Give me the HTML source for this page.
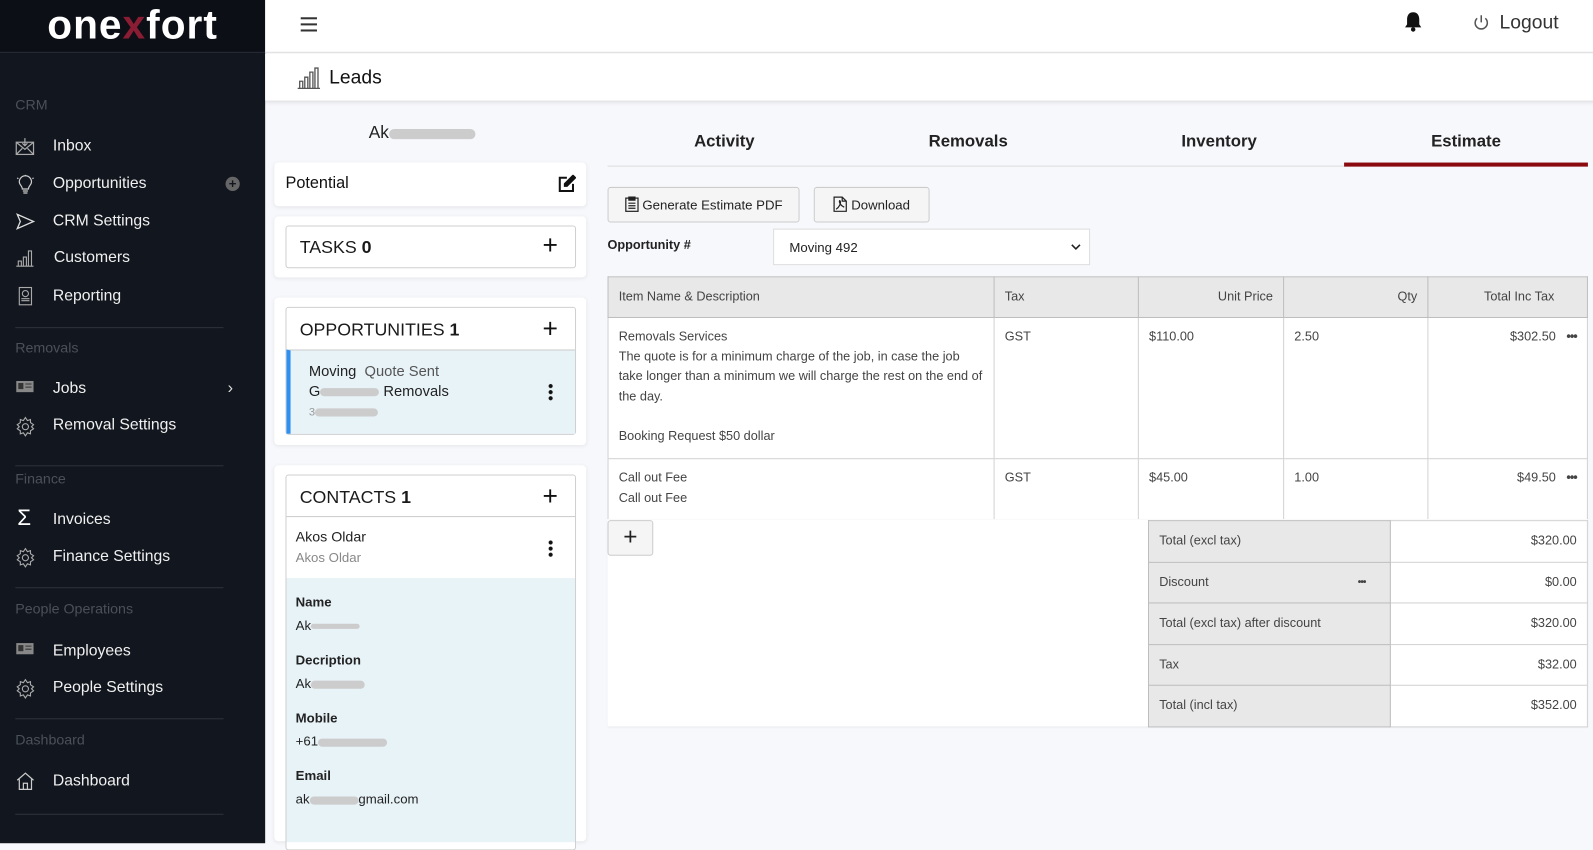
<!DOCTYPE html>
<html><head><meta charset="utf-8"><style>
*{box-sizing:border-box;margin:0;padding:0}
body{width:1593px;height:823px;overflow:hidden;background:#f7f8fc;font-family:"Liberation Sans",sans-serif;position:relative;color:#222}
#w{position:absolute;left:0;top:0;width:1568px;height:810px;transform:scale(1.01594);transform-origin:0 0}
.a{position:absolute}
#sb{left:0;top:0;width:261px;height:830px;background:#12161e}
#logo{left:0;top:0;width:261px;height:52px;background:#0c0f16;border-bottom:1px solid #2a2e36;color:#fff;font-size:40px;font-weight:bold;text-align:center;line-height:50px;letter-spacing:1px}
.sec{left:15px;font-size:14px;color:#4b5059}
.it{left:52px;font-size:15.5px;color:#f0f0f0}
.ic{left:15px;width:20px;height:18px;color:#bbb}
.hr{left:15px;width:205px;height:1px;background:#2e333b}
.card{background:#fff;border-radius:4px;box-shadow:0 1px 4px rgba(0,0,0,.08)}
.box{border:1px solid #cfcfcf;border-radius:3px;background:#fff}
.ttl{font-size:17.5px;color:#1a1a1a}
.plus{font-size:26px;font-weight:300;color:#111}
.lbl{left:291px;font-size:13px;font-weight:bold;color:#222}
.val{left:291px;font-size:13px;color:#222}
.blur{display:inline-block;background:#ccc;border-radius:5px;height:8px;vertical-align:middle}
.tab{top:130px;font-size:16.5px;font-weight:bold;color:#222;text-align:center}
table{border-collapse:collapse;table-layout:fixed}
td{border:1px solid #d2d2d2;font-size:12.5px;color:#444;vertical-align:top;padding:9px 10px;line-height:19.5px}
.th td{background:#e8e8e8;border-color:#bdbdbd;padding:0 10px;height:40px;vertical-align:middle}
.r{text-align:right}
.tot td{height:40.5px;padding:0 10px;vertical-align:middle}
.tot td.g{background:#e8e8e8;border-color:#bdbdbd}
.btn{background:#f5f5f5;border:1px solid #ccc;border-radius:3px;font-size:13px;color:#222;text-align:center}
</style></head><body><div id="w">
<div id="sb" class="a"></div>
<div id="logo" class="a">one<span style="color:#8a1c33">x</span>fort</div>
<div class="a sec" style="top:95px">CRM</div>
<div class="a ic" style="top:135px"><svg width="20" height="18" viewBox="0 0 20 18" fill="none" stroke="#aaa" stroke-width="1.2"><rect x="1" y="5" width="17" height="12"/><path d="M1 5l8.5 7L18 5M1 17l6-6M18 17l-6-6M9.5 1v7M7 6l2.5 2.5L12 6"/></svg></div>
<div class="a it" style="top:135px">Inbox</div>
<div class="a ic" style="top:172px"><svg width="20" height="20" viewBox="0 0 20 20" fill="none" stroke="#ccc" stroke-width="1.2"><path d="M7 14c0-3-3-4-3-7a6 6 0 0112 0c0 3-3 4-3 7zM7.5 16h5M8 18h4M10 0v1M2 3l1 1M18 3l-1 1"/></svg></div>
<div class="a it" style="top:172px">Opportunities</div>
<div class="a" style="left:222px;top:174px;width:14px;height:14px;border-radius:50%;background:#666;color:#12161e;font-size:13px;line-height:14px;text-align:center;font-weight:bold">+</div>
<div class="a ic" style="top:209px"><svg width="20" height="18" viewBox="0 0 20 18" fill="none" stroke="#ddd" stroke-width="1.3"><path d="M2 2l16 7-16 7 3-7z"/></svg></div>
<div class="a it" style="top:209px">CRM Settings</div>
<div class="a ic" style="top:245px"><svg width="20" height="18" viewBox="0 0 20 18" fill="none" stroke="#aaa" stroke-width="1.1"><path d="M1 17h17M3 17v-5h3v5M8 17V8h3v9M13 17V2h3v15"/></svg></div>
<div class="a it" style="top:245px;left:53px">Customers</div>
<div class="a ic" style="top:282px"><svg width="20" height="20" viewBox="0 0 20 20" fill="none" stroke="#aaa" stroke-width="1.1"><rect x="4" y="1" width="12" height="17"/><circle cx="10" cy="7" r="3"/><path d="M6 12h8M6 14h8"/></svg></div>
<div class="a it" style="top:283px">Reporting</div>
<div class="a hr" style="top:322px"></div>
<div class="a sec" style="top:334px">Removals</div>
<div class="a ic" style="top:374px"><svg width="20" height="14" viewBox="0 0 20 14"><rect x="1" y="1" width="17" height="11" fill="#888"/><rect x="3" y="3" width="5" height="6" fill="#333"/><path d="M10 4h6M10 7h6" stroke="#333"/></svg></div>
<div class="a it" style="top:374px">Jobs</div>
<div class="a" style="left:224px;top:374px;color:#ddd;font-size:16px">›</div>
<div class="a ic" style="top:410px"><svg width="20" height="20" viewBox="0 0 20 20" fill="none" stroke="#aaa" stroke-width="1.1"><circle cx="10" cy="10" r="3"/><path d="M10 1l2 3 3-1 0 3 3 2-2 2 2 2-3 2 0 3-3-1-2 3-2-3-3 1 0-3-3-2 2-2-2-2 3-2 0-3 3 1z"/></svg></div>
<div class="a it" style="top:410px">Removal Settings</div>
<div class="a hr" style="top:458px"></div>
<div class="a sec" style="top:463px">Finance</div>
<div class="a" style="left:17px;top:497px;color:#fff;font-size:22px">Σ</div>
<div class="a it" style="top:503px">Invoices</div>
<div class="a ic" style="top:539px"><svg width="20" height="20" viewBox="0 0 20 20" fill="none" stroke="#aaa" stroke-width="1.1"><circle cx="10" cy="10" r="3"/><path d="M10 1l2 3 3-1 0 3 3 2-2 2 2 2-3 2 0 3-3-1-2 3-2-3-3 1 0-3-3-2 2-2-2-2 3-2 0-3 3 1z"/></svg></div>
<div class="a it" style="top:539px">Finance Settings</div>
<div class="a hr" style="top:578px"></div>
<div class="a sec" style="top:591px">People Operations</div>
<div class="a ic" style="top:632px"><svg width="20" height="14" viewBox="0 0 20 14"><rect x="1" y="1" width="17" height="11" fill="#888"/><rect x="3" y="3" width="5" height="6" fill="#333"/><path d="M10 4h6M10 7h6" stroke="#333"/></svg></div>
<div class="a it" style="top:632px">Employees</div>
<div class="a ic" style="top:668px"><svg width="20" height="20" viewBox="0 0 20 20" fill="none" stroke="#aaa" stroke-width="1.1"><circle cx="10" cy="10" r="3"/><path d="M10 1l2 3 3-1 0 3 3 2-2 2 2 2-3 2 0 3-3-1-2 3-2-3-3 1 0-3-3-2 2-2-2-2 3-2 0-3 3 1z"/></svg></div>
<div class="a it" style="top:668px">People Settings</div>
<div class="a hr" style="top:707px"></div>
<div class="a sec" style="top:720px">Dashboard</div>
<div class="a ic" style="top:759px"><svg width="20" height="20" viewBox="0 0 20 20" fill="none" stroke="#ccc" stroke-width="1.2"><path d="M2 9l8-7 8 7M4 8v10h12V8M8 18v-6h4v6"/></svg></div>
<div class="a it" style="top:760px">Dashboard</div>
<div class="a hr" style="top:801px"></div>

<div class="a" style="left:261px;top:0;width:1332px;height:52px;background:#fff;border-bottom:1px solid #ddd"></div>
<div class="a" style="left:296px;top:17px;width:16px;height:14px;border-top:2px solid #333;border-bottom:2px solid #333"><div style="margin-top:4px;height:2px;background:#333"></div></div>
<div class="a" style="left:1381px;top:10px"><svg width="20" height="22" viewBox="0 0 20 22"><path d="M10 2c-4 0-6 3-6 7v5l-2 3h16l-2-3V9c0-4-2-7-6-7z" fill="#111"/><circle cx="10" cy="19" r="2.2" fill="#111"/></svg></div>
<div class="a" style="left:1449px;top:14px"><svg width="18" height="18" viewBox="0 0 18 18" fill="none" stroke="#555" stroke-width="1.5"><path d="M9 1v7M5 4a6 6 0 108 0"/></svg></div>
<div class="a" style="left:1476px;top:12px;font-size:19px;color:#333">Logout</div>

<div class="a" style="left:261px;top:53px;width:1332px;height:46px;background:#fff;box-shadow:0 2px 4px rgba(0,0,0,.12)"></div>
<div class="a" style="left:292px;top:66px"><svg width="24" height="22" viewBox="0 0 24 22" fill="none" stroke="#555" stroke-width="1.3"><path d="M1 21h22M3 21v-7h3v7M8 21V10h3v11M13 21V5h3v16M18 21V1h3v20"/></svg></div>
<div class="a" style="left:324px;top:66px;font-size:19px;color:#111">Leads</div>

<div class="a" style="left:363px;top:121px;font-size:17px;color:#222">Ak<span class="blur" style="width:85px;height:10px"></span></div>
<div class="a card" style="left:270px;top:160px;width:307px;height:43px"></div>
<div class="a" style="left:281px;top:172px;font-size:16px;color:#111">Potential</div>
<div class="a" style="left:549px;top:172px"><svg width="18" height="18" viewBox="0 0 18 18" fill="none" stroke="#111" stroke-width="2"><path d="M9 3H2v13h13V9"/><path d="M15 1l2 2-8 8H7V9z" fill="#111"/></svg></div>

<div class="a card" style="left:270px;top:213px;width:307px;height:60px"></div>
<div class="a box" style="left:281px;top:222px;width:286px;height:42px"></div>
<div class="a ttl" style="left:295px;top:233px">TASKS <b>0</b></div>
<div class="a plus" style="left:534px;top:226px">+</div>

<div class="a card" style="left:270px;top:293px;width:307px;height:145px"></div>
<div class="a box" style="left:281px;top:302px;width:286px;height:126px"></div>
<div class="a ttl" style="left:295px;top:314px">OPPORTUNITIES <b>1</b></div>
<div class="a plus" style="left:534px;top:308px">+</div>
<div class="a" style="left:282px;top:344px;width:284px;height:83px;background:#e8f3f8;border-top:1px solid #ccc;border-left:4px solid #2d8ff0"></div>
<div class="a" style="left:304px;top:358px;font-size:14.5px;color:#222">Moving <span style="color:#555">&nbsp;Quote Sent</span></div>
<div class="a" style="left:304px;top:378px;font-size:14.5px;color:#222">G<span class="blur" style="width:58px"></span> Removals</div>
<div class="a" style="left:304px;top:400px;font-size:11px;color:#999">3<span class="blur" style="width:62px"></span></div>
<div class="a" style="left:540px;top:377px;width:4px;height:18px;background:radial-gradient(circle,#111 1.8px,transparent 2.2px) 0 0/4px 6px"></div>

<div class="a card" style="left:270px;top:458px;width:307px;height:370px"></div>
<div class="a box" style="left:281px;top:467px;width:286px;height:370px"></div>
<div class="a ttl" style="left:295px;top:479px">CONTACTS <b>1</b></div>
<div class="a plus" style="left:534px;top:473px">+</div>
<div class="a" style="left:282px;top:508px;width:284px;height:1px;background:#ccc"></div>
<div class="a" style="left:291px;top:520px;font-size:14px;color:#222">Akos Oldar</div>
<div class="a" style="left:291px;top:541px;font-size:13px;color:#888">Akos Oldar</div>
<div class="a" style="left:540px;top:531px;width:4px;height:18px;background:radial-gradient(circle,#111 1.8px,transparent 2.2px) 0 0/4px 6px"></div>
<div class="a" style="left:282px;top:569px;width:284px;height:260px;background:#e8f3f8"></div>
<div class="a lbl" style="top:585px">Name</div>
<div class="a val" style="top:608px">Ak<span class="blur" style="width:48px;height:5px"></span></div>
<div class="a lbl" style="top:642px">Decription</div>
<div class="a val" style="top:665px">Ak<span class="blur" style="width:53px"></span></div>
<div class="a lbl" style="top:699px">Mobile</div>
<div class="a val" style="top:722px">+61<span class="blur" style="width:68px"></span></div>
<div class="a lbl" style="top:756px">Email</div>
<div class="a val" style="top:779px">ak<span class="blur" style="width:48px"></span>gmail.com</div>

<div class="a" style="left:598px;top:163px;width:965px;height:1px;background:#ddd"></div>
<div class="a tab" style="left:598px;width:230px">Activity</div>
<div class="a tab" style="left:838px;width:230px">Removals</div>
<div class="a tab" style="left:1085px;width:230px">Inventory</div>
<div class="a tab" style="left:1323px;width:240px">Estimate</div>
<div class="a" style="left:1323px;top:160px;width:240px;height:4px;background:#8b0a0f"></div>

<div class="a btn" style="left:598px;top:184px;width:189px;height:35px;line-height:33px">
<svg width="14" height="16" viewBox="0 0 14 16" fill="none" stroke="#222" stroke-width="1.2" style="vertical-align:-3px"><rect x="1" y="2" width="12" height="13"/><rect x="4" y="1" width="6" height="3" fill="#222"/><path d="M3.5 7h7M3.5 9.5h7M3.5 12h7"/></svg> Generate Estimate PDF</div>
<div class="a btn" style="left:801px;top:184px;width:114px;height:35px;line-height:33px">
<svg width="14" height="16" viewBox="0 0 14 16" fill="none" stroke="#222" stroke-width="1.2" style="vertical-align:-3px"><path d="M1 1h8l4 4v10H1z M9 1v4h4M3 13c3-2 5-6 4-8s-2 3 4 6"/></svg> Download</div>
<div class="a" style="left:598px;top:234px;font-size:12.5px;font-weight:bold;color:#222">Opportunity #</div>
<div class="a" style="left:761px;top:225px;width:312px;height:36px;background:#fff;border:1px solid #ddd"></div>
<div class="a" style="left:777px;top:236px;font-size:13px;color:#222">Moving 492</div>
<div class="a" style="left:1054px;top:234px"><svg width="10" height="8" viewBox="0 0 10 8" fill="none" stroke="#222" stroke-width="1.6"><path d="M1 2l4 4 4-4"/></svg></div>

<table class="a" style="left:598px;top:272px;width:965px;background:#fff">
<colgroup><col style="width:380px"><col style="width:142px"><col style="width:143px"><col style="width:142px"><col></colgroup>
<tr class="th"><td>Item Name &amp; Description</td><td>Tax</td><td class="r">Unit Price</td><td class="r">Qty</td><td class="r" style="padding-right:32px">Total Inc Tax</td></tr>
<tr style="height:139px"><td>Removals Services<br>The quote is for a minimum charge of the job, in case the job take longer than a minimum we will charge the rest on the end of the day.<br><br>Booking Request $50 dollar</td><td>GST</td><td>$110.00</td><td>2.50</td><td class="r">$302.50 &nbsp;&nbsp;<b style="letter-spacing:-1px">•••</b></td></tr>
<tr style="height:60px"><td>Call out Fee<br>Call out Fee</td><td>GST</td><td>$45.00</td><td>1.00</td><td class="r">$49.50 &nbsp;&nbsp;<b style="letter-spacing:-1px">•••</b></td></tr>
</table>
<div class="a" style="left:598px;top:511px;width:965px;height:204px;background:#fff;box-shadow:0 1px 2px rgba(0,0,0,.06)"></div>
<div class="a btn" style="left:598px;top:512px;width:45px;height:35px;font-size:24px;line-height:32px;font-weight:300">+</div>
<table class="a tot" style="left:1130px;top:512px;width:433px;background:#fff">
<colgroup><col style="width:238px"><col></colgroup>
<tr><td class="g">Total (excl tax)</td><td class="r">$320.00</td></tr>
<tr><td class="g">Discount<span style="float:right;margin-right:14px;font-weight:bold;letter-spacing:-1px;font-size:10px">•••</span></td><td class="r">$0.00</td></tr>
<tr><td class="g">Total (excl tax) after discount</td><td class="r">$320.00</td></tr>
<tr><td class="g">Tax</td><td class="r">$32.00</td></tr>
<tr><td class="g">Total (incl tax)</td><td class="r">$352.00</td></tr>
</table>
</div></body></html>
